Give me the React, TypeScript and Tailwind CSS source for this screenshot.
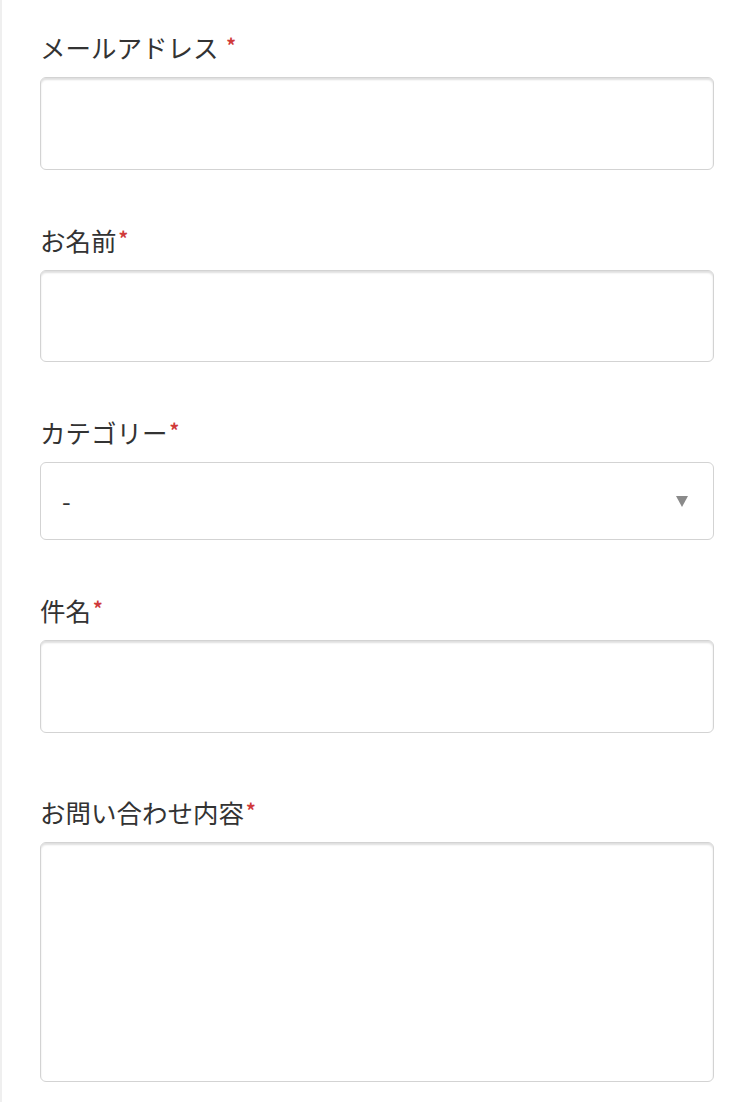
import React from 'react';

const font = { fontFamily: '"Noto Sans CJK JP", "Noto Sans", sans-serif' };

function Label({ text, spaced = false }: { text: string; spaced?: boolean }) {
  return (
    <label className="flex h-[37px] items-center text-[25.5px] leading-[37px] text-[#333333] mb-[12px] whitespace-pre">
      {text}
      {spaced && ' '}
      <span className="ml-[2px] text-[#d03a3a] text-[19px] font-bold leading-none -mt-[4px]">*</span>
    </label>
  );
}

const boxClass =
  'block w-full rounded-md border border-[#d3d3d3] bg-white shadow-[inset_0_2px_2px_rgba(0,0,0,0.13)] outline-none';

export default function App() {
  return (
    <div className="min-h-screen bg-white border-l-2 border-[#efefef] pl-[38px] pr-[29px] pt-[28px] pb-[22px]" style={font}>
      {/* Email */}
      <div>
        <Label text="メールアドレス" spaced />
        <input type="email" className={`${boxClass} h-[93px]`} />
      </div>

      {/* Name */}
      <div className="mt-[51px]">
        <Label text="お名前" />
        <input type="text" className={`${boxClass} h-[92px]`} />
      </div>

      {/* Category */}
      <div className="mt-[51px]">
        <Label text="カテゴリー" />
        <div className="flex h-[78px] w-full items-center justify-between rounded-md border border-[#d3d3d3] bg-white pl-[21px] pr-[25px]">
          <span className="text-[25px] text-[#333333]">-</span>
          <svg width="12" height="11" viewBox="0 0 12 11" aria-hidden>
            <path d="M0 0 H12 L6 11 Z" fill="#8a8a8a" />
          </svg>
        </div>
      </div>

      {/* Subject */}
      <div className="mt-[51px]">
        <Label text="件名" />
        <input type="text" className={`${boxClass} h-[93px]`} />
      </div>

      {/* Message */}
      <div className="mt-[60px]">
        <Label text="お問い合わせ内容" />
        <textarea className={`${boxClass} h-[240px] resize-none`} />
      </div>
    </div>
  );
}
